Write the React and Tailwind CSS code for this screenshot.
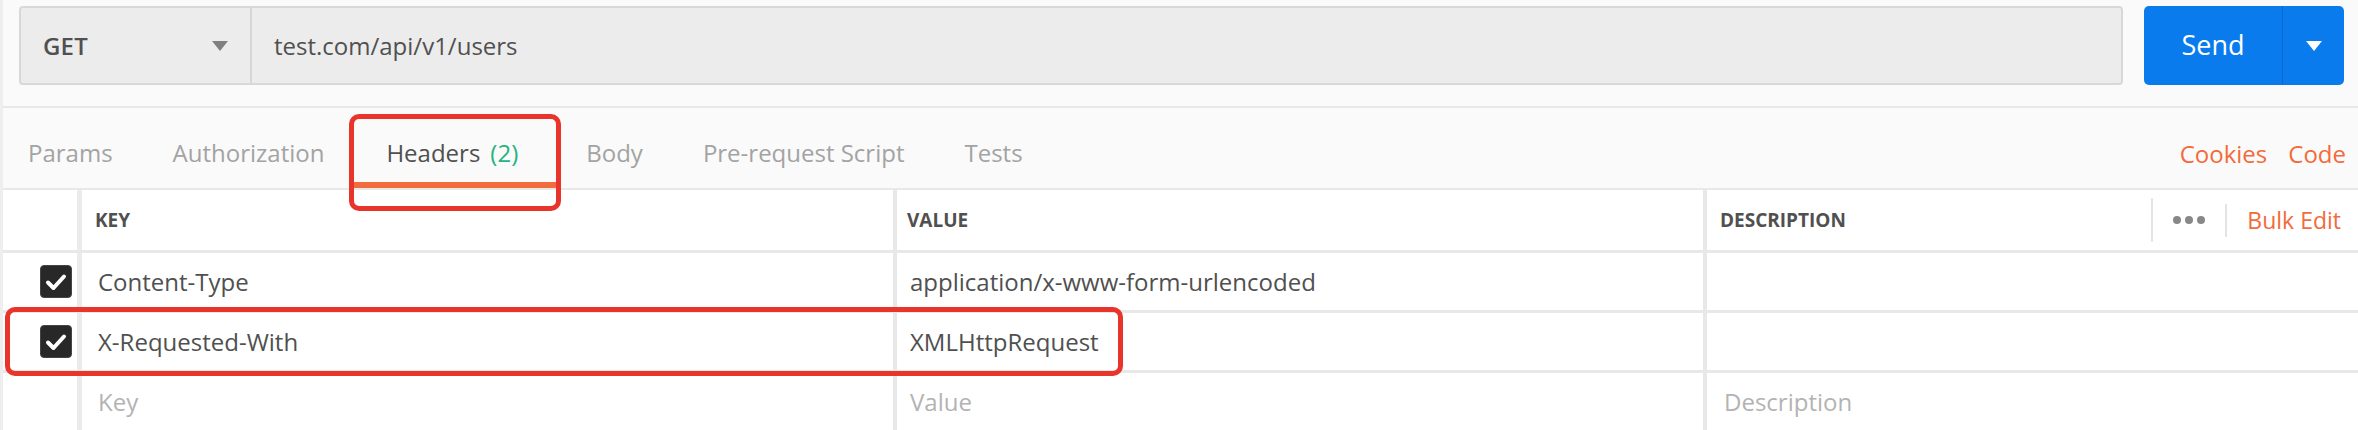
import React from "react";

function Check() {
  return (
    <div className="w-[32px] h-[33px] rounded-[4px] bg-[#282828] border border-[#444] flex items-center justify-center">
      <svg width="22" height="18" viewBox="0 0 22 18">
        <polyline points="3,9.5 8.5,15 19,3.5" fill="none" stroke="#ffffff" strokeWidth="4" strokeLinecap="round" strokeLinejoin="round" />
      </svg>
    </div>
  );
}

function Row({ checked, k, v, d, placeholder, last }) {
  const txt = placeholder ? "text-[#b3b3b3]" : "text-[#505050]";
  return (
    <div className={`flex ${last ? "h-[57px]" : "h-[60px] border-b-[3px] border-[#e8e8e8]"}`}>
      <div className="w-[79px] shrink-0 flex items-center justify-end pr-[5px] border-r-[5px] border-[#ebebeb]">
        {checked && <Check />}
      </div>
      <div className={`w-[815px] shrink-0 flex items-center pl-[16px] border-r-[4px] border-[#e8e8e8] text-[24px] ${txt}`}>{k}</div>
      <div className={`w-[810px] shrink-0 flex items-center pl-[13px] border-r-[4px] border-[#e8e8e8] text-[24px] ${txt}`}>{v}</div>
      <div className={`flex-1 flex items-center pl-[17px] text-[24px] ${txt}`}>{d}</div>
    </div>
  );
}

export default function App() {
  const tabs2 = ["Body", "Pre-request Script", "Tests"];
  return (
    <div className="relative w-[2358px] h-[430px] overflow-hidden bg-white font-['Open_Sans',sans-serif] border-l-[3px] border-[#eeeeee]">
      {/* top bar */}
      <div className="h-[108px] bg-[#fafafa] border-b-2 border-[#e8e8e8] flex items-start pl-[16px] pr-[14px]">
        <div className="mt-[6px] h-[79px] flex-1 flex rounded-[4px] border-2 border-[#d8d8d8] bg-[#ececec]">
          <div className="w-[231px] shrink-0 flex items-center justify-between pl-[22px] pr-[22px] border-r-2 border-[#d6d6d6]">
            <span className="text-[24px] font-semibold text-[#505050] tracking-[0.2px]">GET</span>
            <svg width="16" height="10" viewBox="0 0 16 10"><polygon points="0,0 16,0 8,10" fill="#808080" /></svg>
          </div>
          <div className="flex-1 flex items-center pl-[22px] text-[24px] text-[#505050]">test.com/api/v1/users</div>
        </div>
        <div className="mt-[6px] ml-[21px] h-[79px] w-[200px] shrink-0 flex rounded-[5px] bg-[#097bed] overflow-hidden">
          <div className="w-[139px] flex items-center justify-center text-white text-[27px] border-r border-[#0a69cf]">Send</div>
          <div className="flex-1 flex items-center justify-center">
            <svg width="16" height="10" viewBox="0 0 16 10"><polygon points="0,0 16,0 8,10" fill="#ffffff" /></svg>
          </div>
        </div>
      </div>

      {/* tabs */}
      <div className="h-[82px] bg-[#fafafa] border-b-2 border-[#e8e8e8] flex items-stretch text-[24px]">
        <div className="flex items-center pt-[10px] pl-[25px] pr-[30px] text-[#a3a3a3]">Params</div>
        <div className="flex items-center pt-[10px] px-[30px] text-[#a3a3a3]">Authorization</div>
        <div className="flex items-center pt-[16px] pl-[32px] pr-[38px] border-b-[6px] border-[#f26b3a] text-[#505050]">
          Headers<span className="ml-[10px] text-[#26b47f]">(2)</span>
        </div>
        {tabs2.map((t) => (
          <div key={t} className="flex items-center pt-[10px] px-[30px] text-[#a3a3a3]">{t}</div>
        ))}
        <div className="ml-auto flex items-center pt-[12px] pr-[12px] gap-[21px] text-[#f26b3a]">
          <span>Cookies</span>
          <span>Code</span>
        </div>
      </div>

      {/* table header */}
      <div className="flex h-[63px] border-b-[3px] border-[#e8e8e8]">
        <div className="w-[79px] shrink-0 border-r-[5px] border-[#ebebeb]"></div>
        <div className="w-[815px] shrink-0 flex items-center pl-[13px] border-r-[4px] border-[#e8e8e8] text-[19px] font-bold text-[#505050]">KEY</div>
        <div className="w-[810px] shrink-0 flex items-center pl-[10px] border-r-[4px] border-[#e8e8e8] text-[19px] font-bold text-[#505050]">VALUE</div>
        <div className="flex-1 flex items-center pl-[13px] pr-[17px]">
          <span className="text-[19px] font-bold text-[#505050]">DESCRIPTION</span>
          <div className="ml-auto flex items-center h-full">
            <div className="w-[2px] h-[44px] bg-[#e4e4e4]"></div>
            <div className="flex gap-[4px] ml-[20px] mr-[20px]">
              <span className="w-[8px] h-[8px] rounded-full bg-[#888888]"></span>
              <span className="w-[8px] h-[8px] rounded-full bg-[#888888]"></span>
              <span className="w-[8px] h-[8px] rounded-full bg-[#888888]"></span>
            </div>
            <div className="w-[2px] h-[33px] bg-[#e4e4e4]"></div>
            <span className="ml-[20px] text-[23px] text-[#f26b3a]">Bulk Edit</span>
          </div>
        </div>
      </div>

      <Row checked k="Content-Type" v="application/x-www-form-urlencoded" d="" />
      <Row checked k="X-Requested-With" v="XMLHttpRequest" d="" />
      <Row placeholder last k="Key" v="Value" d="Description" />

      {/* annotation boxes */}
      <div className="absolute left-[346px] top-[114px] w-[212px] h-[97px] rounded-[10px] border-[5px] border-[#e8342a] pointer-events-none"></div>
      <div className="absolute left-[2px] top-[307px] w-[1118px] h-[69px] rounded-[10px] border-[5px] border-[#e8342a] pointer-events-none"></div>
    </div>
  );
}
